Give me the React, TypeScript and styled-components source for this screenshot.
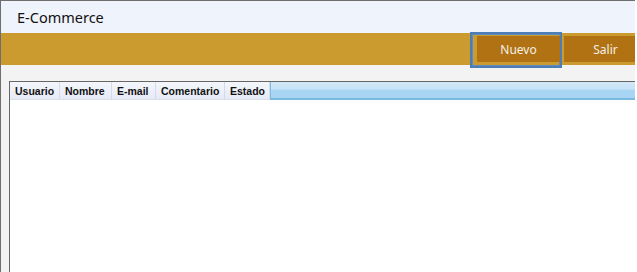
import React from "react";
import styled, { createGlobalStyle } from "styled-components";

const Global = createGlobalStyle`
  html, body { margin: 0; padding: 0; background: #ffffff; }
  #root { width: 637px; height: 272px; overflow: hidden; }
`;

const Window = styled.div`
  width: 635px;
  height: 272px;
  box-sizing: border-box;
  border-left: 1px solid #6e6e6e;
  border-top: 1px solid #6e6e6e;
  background: #f3f3f3;
  display: flex;
  flex-direction: column;
  overflow: hidden;
  font-family: "Noto Sans", "Open Sans", sans-serif;
`;

const TitleBar = styled.div`
  height: 32px;
  flex: none;
  background: #eff3fb;
  display: flex;
  align-items: center;
  padding-left: 16px;
  font-size: 14.5px;
  color: #111111;
`;

const Toolbar = styled.div`
  height: 32px;
  flex: none;
  background: #cc9b30;
  display: flex;
  align-items: flex-start;
  justify-content: flex-end;
`;

const FocusRing = styled.div`
  position: relative;
  z-index: 1;
  margin-top: -1px;
  border: 2px solid #4d7db5;
  box-shadow: inset 0 0 0 1px #5f8cc0;
  padding: 2px 0 4px 5px;
  display: flex;
`;

const ToolButton = styled.button<{ $clip?: boolean }>`
  width: 83px;
  height: 26px;
  flex: none;
  border: none;
  background: #b07213;
  color: #f4f0e8;
  font-family: "Noto Sans", "Open Sans", sans-serif;
  font-size: 12px;
  padding: 0;
  margin-top: ${(p) => (p.$clip ? "3px" : "0")};
  margin-left: ${(p) => (p.$clip ? "2px" : "0")};
  margin-right: ${(p) => (p.$clip ? "-12px" : "0")};
`;

const Content = styled.div`
  flex: 1;
  padding: 16px 0 0 8px;
  display: flex;
`;

const Grid = styled.div`
  flex: 1;
  background: #ffffff;
  border-top: 1px solid #666666;
  border-left: 1px solid #666666;
  display: flex;
  flex-direction: column;
`;

const HeaderRow = styled.div`
  height: 18px;
  display: flex;
`;

const HeaderCell = styled.div<{ $w: number }>`
  width: ${(p) => p.$w}px;
  flex: none;
  box-sizing: border-box;
  border-right: 1px solid #d5dae6;
  border-bottom: 1px solid #d9deea;
  background: linear-gradient(#f4f6fc, #e6eaf6);
  padding-left: 5px;
  display: flex;
  align-items: center;
  font-family: "Liberation Sans", Arial, sans-serif;
  font-weight: bold;
  font-size: 10.5px;
  color: #111111;
`;

const HeaderFiller = styled.div`
  flex: 1;
  box-sizing: border-box;
  border-left: 1px solid #86b9df;
  border-bottom: 2px solid #7ab8e0;
  background: linear-gradient(#d2e8f8 0%, #c6e3f7 45%, #aad6f5 50%, #a8d5f4 100%);
`;

const columns = [
  { label: "Usuario", w: 50 },
  { label: "Nombre", w: 52 },
  { label: "E-mail", w: 44 },
  { label: "Comentario", w: 69 },
  { label: "Estado", w: 45 },
];

export default function App() {
  return (
    <>
      <Global />
      <Window>
        <TitleBar>E-Commerce</TitleBar>
        <Toolbar>
          <FocusRing>
            <ToolButton>Nuevo</ToolButton>
          </FocusRing>
          <ToolButton $clip>Salir</ToolButton>
        </Toolbar>
        <Content>
          <Grid>
            <HeaderRow>
              {columns.map((c) => (
                <HeaderCell key={c.label} $w={c.w}>
                  {c.label}
                </HeaderCell>
              ))}
              <HeaderFiller />
            </HeaderRow>
          </Grid>
        </Content>
      </Window>
    </>
  );
}
